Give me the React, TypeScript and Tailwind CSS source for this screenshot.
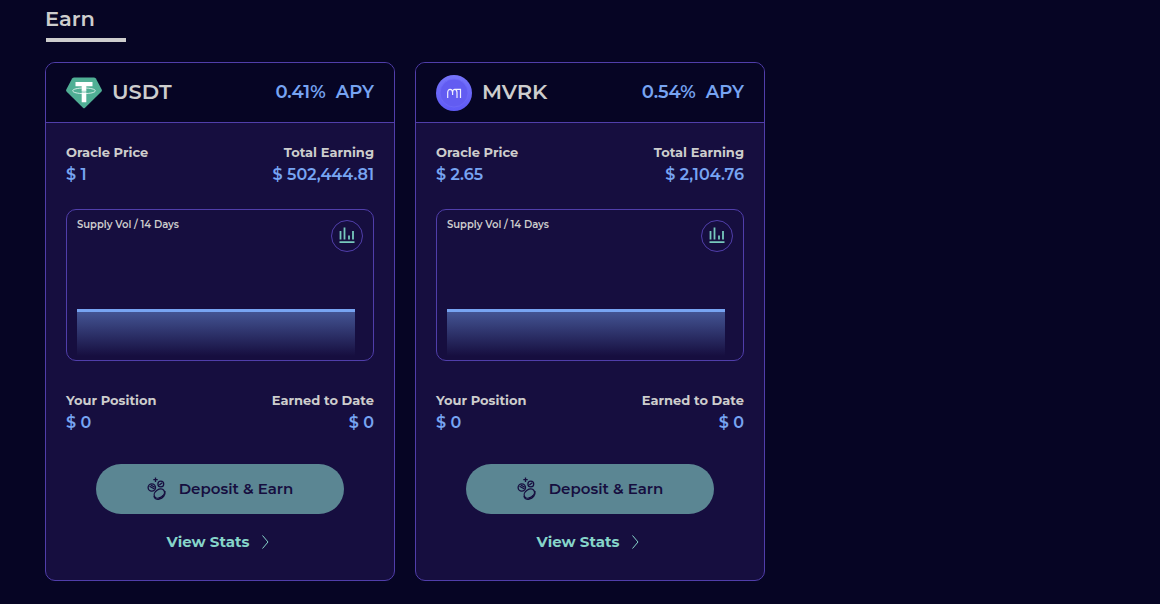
import type { ReactNode } from "react";

interface Asset {
  symbol: string;
  apy: string;
  oraclePrice: string;
  totalEarning: string;
  position: string;
  earned: string;
  icon: ReactNode;
}

function TetherIcon() {
  return (
    <svg width="36" height="32" viewBox="0 0 36 32" fill="none" aria-hidden="true">
      <path d="M8.2.4h19.6c.9 0 1.6.4 2.1 1.2l5.8 10.8c.4.8.3 1.6-.4 2.3L18.8 31a1.2 1.2 0 0 1-1.6 0L.7 14.7c-.7-.7-.8-1.5-.4-2.3L6.1 1.6C6.6.8 7.3.4 8.2.4Z" fill="#50af95" />
      <path d="M18 11c-6.400 0-11.300 1.200-11.300 2.800s4.900 2.800 11.300 2.800 11.300-1.200 11.300-2.800S24.400 11 18 11Z" stroke="#fff" strokeOpacity="0.85" strokeWidth="0.9" />
      <path d="M9.500 5h17v4.200h-6.200v4.600h-4.600V9.200H9.500ZM15.700 16h4.600v9.200h-4.600Z" fill="#fff" />
      <path d="M15.700 13.500h4.600v3h-4.600Z" fill="#fff" />
      <path d="M13.500 14.800c3 .4 6 .4 9 0" stroke="#50af95" strokeWidth="0.8" />
    </svg>
  );
}

function MavrykIcon() {
  return (
    <svg width="36" height="36" viewBox="0 0 36 36" fill="none" aria-hidden="true">
      <defs>
        <linearGradient id="mvrkRim" x1="0" y1="0" x2="0" y2="1">
          <stop offset="0%" stopColor="#7674fb" />
          <stop offset="100%" stopColor="#5f5af6" />
        </linearGradient>
      </defs>
      <circle cx="18" cy="18" r="18" fill="url(#mvrkRim)" />
      <circle cx="18" cy="18" r="14" fill="#625cf1" stroke="#6e69f7" strokeWidth="0.8" />
      <path
        d="M11.700 23v-5.300c0-2.100.9-3.300 2.400-3.300s2.500 1.200 2.500 3.300V20M16.600 17.700c0-2.100.8-3.300 2.200-3.300s2.200 1.200 2.200 3.300V23M18.800 14.400h5.700V23"
        stroke="#f0efff"
        strokeWidth="1.2"
      />
    </svg>
  );
}

function BarsIcon() {
  return (
    <svg width="16" height="18" viewBox="0 0 16 18" fill="none" stroke="#77c9bd" aria-hidden="true">
      <path d="M1.500 4v8.500M5.500.5v12M10 8.500v4M14 4v8.500" strokeWidth="1.800" />
      <path d="M.5 15.200h15" strokeWidth="1.800" />
    </svg>
  );
}

function CoinsIcon() {
  return (
    <svg width="20" height="24" viewBox="0 0 20 24" fill="none" stroke="currentColor" strokeWidth="1.300" aria-hidden="true">
      <path d="M8.500.5v4.400M6.300 2.700h4.400" />
      <circle cx="4.800" cy="10.500" r="3.700" />
      <path d="M2.500 9.300l5 2.700M3.800 8l4 2.200" />
      <circle cx="13.800" cy="7" r="2.900" />
      <path d="M12.300 8l3-2.200" />
      <ellipse cx="12.300" cy="16.600" rx="5.600" ry="4" transform="rotate(-35 12.300 16.600)" />
      <path d="M7 18.900c.2 2.600 2.400 3.900 5.200 3.300 3.600-.8 6.400-4 5.800-8M12.500 22v-1.700M16 20l-.6-1.600" />
    </svg>
  );
}

const assets: Asset[] = [
  {
    symbol: "USDT",
    apy: "0.41%",
    oraclePrice: "1",
    totalEarning: "502,444.81",
    position: "0",
    earned: "0",
    icon: <TetherIcon />,
  },
  {
    symbol: "MVRK",
    apy: "0.54%",
    oraclePrice: "2.65",
    totalEarning: "2,104.76",
    position: "0",
    earned: "0",
    icon: <MavrykIcon />,
  },
];

function Stat({ label, value }: { label: string; value: string }) {
  return (
    <div className="last:text-right">
      <dt className="text-[13px] leading-[22px] font-bold text-[#cdcdcd]">{label}</dt>
      <dd className="text-[16px] leading-6 font-semibold text-[#77a4f2]">$ {value}</dd>
    </div>
  );
}

function SupplyChart({ symbol }: { symbol: string }) {
  const gradientId = `supply-${symbol}`;

  return (
    <div className="mt-[22px] flex h-[152px] flex-col rounded-[10px] border border-[#503eaa] px-[10px]">
      <div className="flex items-start justify-between pt-[10px]">
        <h3 className="text-[10px] leading-[10px] font-semibold text-[#cdcdcd]">Supply Vol / 14 Days</h3>
        <button
          type="button"
          aria-label="Show chart"
          className="flex size-8 items-center justify-center rounded-full border border-[#503eaa]"
        >
          <BarsIcon />
        </button>
      </div>
      <svg className="mt-auto mr-2 mb-1 h-[47px]" viewBox="0 0 278 47" preserveAspectRatio="none" role="img" aria-label="Supply volume">
        <defs>
          <linearGradient id={gradientId} x1="0" y1="0" x2="0" y2="1">
            <stop offset="0%" stopColor="#77a4f2" stopOpacity={0.5} />
            <stop offset="100%" stopColor="#77a4f2" stopOpacity={0} />
          </linearGradient>
        </defs>
        <rect width="278" height="47" fill={`url(#${gradientId})`} />
        <rect width="278" height="3" fill="#77a4f2" />
      </svg>
    </div>
  );
}

function EarnCard({ asset }: { asset: Asset }) {
  return (
    <article className="overflow-hidden rounded-[10px] border border-[#503eaa] bg-[#160e3f]">
      <header className="flex h-[60px] items-center justify-between border-b border-[#503eaa] bg-[#060524] px-5">
        <div className="flex items-center gap-[10px]">
          {asset.icon}
          <h2 className="pb-0.5 text-[21px] leading-7 font-semibold text-[#cdcdcd]">{asset.symbol}</h2>
        </div>
        <p className="flex gap-[10px] pb-0.5 text-lg font-semibold text-[#77a4f2]">
          <span>{asset.apy}</span>
          <span>APY</span>
        </p>
      </header>

      <div className="px-5 pt-[18px] pb-[26px]">
        <dl className="flex justify-between">
          <Stat label="Oracle Price" value={asset.oraclePrice} />
          <Stat label="Total Earning" value={asset.totalEarning} />
        </dl>

        <SupplyChart symbol={asset.symbol} />

        <dl className="mt-7 flex justify-between">
          <Stat label="Your Position" value={asset.position} />
          <Stat label="Earned to Date" value={asset.earned} />
        </dl>

        <div className="mt-[29px] flex flex-col items-center gap-4 px-[30px]">
          <button
            type="button"
            className="flex h-[50px] w-full items-center justify-center gap-3 rounded-full bg-[#5b8693] text-[15px] font-semibold text-[#160e3f]"
          >
            <CoinsIcon />
            Deposit &amp; Earn
          </button>
          <a href="#stats" className="flex items-center gap-3 text-[15px] leading-6 font-bold text-[#86d4c9]">
            View Stats
            <svg width="12" height="16" viewBox="0 0 12 16" fill="none" stroke="currentColor" aria-hidden="true">
              <path d="M1.500 1.500l5.500 6.500-5.500 6.500" />
            </svg>
          </a>
        </div>
      </div>
    </article>
  );
}

export default function App() {
  return (
    <main className="min-h-screen bg-[#060524] px-[45px] pt-1 pb-[23px] font-['Montserrat','Inter',sans-serif]">
      <h1 className="text-[21px] leading-[30px] font-semibold text-[#cdcdcd]">Earn</h1>
      <div className="mt-1 ml-px h-1 w-20 bg-[#cdcdcd]" />
      <section className="mt-5 grid grid-cols-[repeat(auto-fill,350px)] gap-5">
        {assets.map((asset) => (
          <EarnCard key={asset.symbol} asset={asset} />
        ))}
      </section>
    </main>
  );
}
